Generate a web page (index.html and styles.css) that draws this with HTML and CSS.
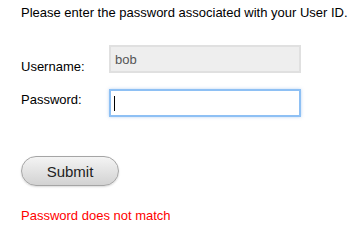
FILE: index.html
```html
<!DOCTYPE html>
<html lang="en">
<head>
  <meta charset="UTF-8">
  <title>Sign In</title>
  <link rel="stylesheet" href="styles.css">
</head>
<body>
  <div class="login">
    <p class="intro">Please enter the password associated with your User ID.</p>

    <div class="field">
      <label for="username" class="low">Username:</label>
      <input type="text" id="username" value="bob" readonly>
    </div>
    <div class="field">
      <label for="password">Password:</label>
      <input type="password" id="password">
      <span class="caret"></span>
    </div>

    <button class="submit">Submit</button>

    <p class="error">Password does not match</p>
  </div>
</body>
</html>
```

FILE: styles.css
```css
body {
  margin: 0;
  font-family: Arial, "Liberation Sans", sans-serif;
  font-size: 13px;
  color: #000;
  background: #fff;
}
.login {
  padding: 5px 0 0 21px;
}
.intro {
  margin: 0 0 25px;
}
.field {
  position: relative;
  display: flex;
  align-items: flex-start;
  margin-bottom: 15px;
}
.field label {
  width: 88px;
  padding-top: 3px;
}
.field label.low {
  padding-top: 14px;
}
.field input {
  width: 192px;
  height: 28px;
  box-sizing: border-box;
  padding: 0 4px;
  font-family: Arial, "Liberation Sans", sans-serif;
  font-size: 13px;
  outline: none;
}
#username {
  background: #eeeeee;
  border: 2px solid #e0e0e0;
  color: #555;
}
#password {
  background: #fff;
  border: 2px solid #8ec0f4;
  box-shadow: 0 0 3px rgba(120, 170, 230, 0.5);
}
.caret {
  position: absolute;
  left: 93px;
  top: 7px;
  width: 1px;
  height: 15px;
  background: #000;
}
.submit {
  display: block;
  margin-top: 39px;
  width: 98px;
  height: 30px;
  border: 1px solid #a5a5a5;
  border-radius: 15px;
  background: linear-gradient(#f4f4f4, #d2d2d2);
  color: #222;
  font-family: Arial, "Liberation Sans", sans-serif;
  font-size: 15px;
  box-shadow: 0 1px 2px rgba(0, 0, 0, 0.15);
}
.error {
  margin: 22px 0 0;
  color: #f00;
}
```
